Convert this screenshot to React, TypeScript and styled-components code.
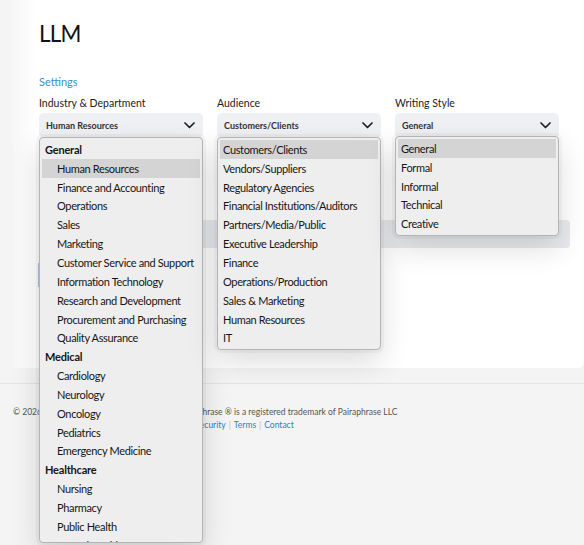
import React from "react";
import styled, { createGlobalStyle } from "styled-components";

const GlobalStyle = createGlobalStyle`
  html, body { margin: 0; padding: 0; background: #f4f4f4; overflow: hidden; }
  body { font-family: Lato, "Open Sans", sans-serif; }
`;

const Page = styled.div`
  width: 584px;
  height: 545px;
  position: relative;
`;

const Top = styled.div`
  padding-left: 13px;
`;

const Card = styled.main`
  height: 368px;
  box-sizing: border-box;
  background: linear-gradient(to right, #f7f7f7 0, #ffffff 24px);
  border-bottom-right-radius: 6px;
  padding: 19px 0 0 26px;
`;

const Title = styled.h1`
  margin: 0;
  font-size: 22.5px;
  font-weight: 400;
  letter-spacing: -0.8px;
  line-height: 30px;
  color: #111;
`;

const SettingsLink = styled.a`
  display: block;
  margin-top: 26px;
  font-size: 11px;
  line-height: 14px;
  color: #3d8fc6;
  text-decoration: none;
`;

const Fields = styled.div`
  display: grid;
  grid-template-columns: repeat(3, 164px);
  column-gap: 14px;
  margin-top: 7px;
`;

const Field = styled.div`
  display: flex;
  flex-direction: column;
  position: relative;
`;

const Label = styled.label`
  font-size: 10.5px;
  line-height: 14px;
  color: #222;
  margin-bottom: 3px;
`;

const SelectBox = styled.div`
  height: 25px;
  box-sizing: border-box;
  background: #eef0f3;
  border-radius: 5px;
  display: flex;
  align-items: center;
  justify-content: space-between;
  padding: 0 8px 0 7px;
  font-size: 9px;
  font-weight: 700;
  color: #333;
`;

const Popup = styled.div<{ $top: number; $height?: number }>`
  position: absolute;
  left: 0;
  top: ${(p) => p.$top}px;
  width: 164px;
  ${(p) => (p.$height ? `height: ${p.$height}px;` : "")}
  overflow: hidden;
  box-sizing: border-box;
  background: #eeeeee;
  border: 1px solid #b4b4b4;
  border-radius: 4px;
  padding: 2px 2px;
  box-shadow: 0 0 0 3px rgba(0, 0, 0, 0.03), 0 12px 30px rgba(0, 0, 0, 0.14);
  z-index: 10;
  font-family: Lato, "Open Sans", sans-serif;
`;

const Option = styled.div<{ $active?: boolean; $group?: boolean; $indent?: boolean }>`
  height: 18.85px;
  display: flex;
  align-items: center;
  padding-left: ${(p) => (p.$indent ? 15 : 3)}px;
  font-size: 11px;
  letter-spacing: ${(p) => (p.$group ? -0.2 : -0.35)}px;
  color: #161616;
  font-weight: ${(p) => (p.$group ? 700 : 400)};
  background: ${(p) => (p.$active ? "#d4d4d4" : "transparent")};
  white-space: nowrap;
`;

const Band = styled.div`
  margin: 82px 14px 0 0;
  height: 28px;
  background: #e8eaed;
  border-radius: 4px;
`;

const BlueBar = styled.div`
  margin: 15px 0 0 -1px;
  width: 2px;
  height: 24px;
  background: #a9c7df;
`;

const Footer = styled.footer`
  margin-top: 15px;
  border-top: 1px solid #e4e4e4;
  padding: 22px 13px 0;
`;

const FooterText = styled.div`
  display: inline-block;
  text-align: center;
  font-size: 8.5px;
  line-height: 13px;
  color: #555;
`;

const FooterLink = styled.a`
  color: #2e7fbf;
  text-decoration: none;
`;

const Sep = styled.span`
  color: #bbb;
  margin: 0 3px;
`;

const Chevron = () => (
  <svg width="11" height="7" viewBox="0 0 11 7" fill="none">
    <path d="M1 1 L5.5 5.5 L10 1" stroke="#222" strokeWidth="1.7" strokeLinecap="round" strokeLinejoin="round" />
  </svg>
);

type Item = { label: string; group?: boolean };

const industry: Item[] = [
  { label: "General", group: true },
  { label: "Human Resources" },
  { label: "Finance and Accounting" },
  { label: "Operations" },
  { label: "Sales" },
  { label: "Marketing" },
  { label: "Customer Service and Support" },
  { label: "Information Technology" },
  { label: "Research and Development" },
  { label: "Procurement and Purchasing" },
  { label: "Quality Assurance" },
  { label: "Medical", group: true },
  { label: "Cardiology" },
  { label: "Neurology" },
  { label: "Oncology" },
  { label: "Pediatrics" },
  { label: "Emergency Medicine" },
  { label: "Healthcare", group: true },
  { label: "Nursing" },
  { label: "Pharmacy" },
  { label: "Public Health" },
  { label: "Mental Health" },
  { label: "Dentistry" },
];

const audience = [
  "Customers/Clients",
  "Vendors/Suppliers",
  "Regulatory Agencies",
  "Financial Institutions/Auditors",
  "Partners/Media/Public",
  "Executive Leadership",
  "Finance",
  "Operations/Production",
  "Sales & Marketing",
  "Human Resources",
  "IT",
];

const styles = ["General", "Formal", "Informal", "Technical", "Creative"];

export default function App() {
  return (
    <Page>
      <GlobalStyle />
      <Top>
        <Card>
          <Title>LLM</Title>
          <SettingsLink href="#">Settings</SettingsLink>
          <Fields>
            <Field>
              <Label>Industry &amp; Department</Label>
              <SelectBox>
                Human Resources
                <Chevron />
              </SelectBox>
              <Popup $top={41} $height={406}>
                {industry.map((it) => (
                  <Option
                    key={it.label}
                    $group={it.group}
                    $indent={!it.group}
                    $active={it.label === "Human Resources"}
                  >
                    {it.label}
                  </Option>
                ))}
              </Popup>
            </Field>
            <Field>
              <Label>Audience</Label>
              <SelectBox>
                Customers/Clients
                <Chevron />
              </SelectBox>
              <Popup $top={41}>
                {audience.map((a, i) => (
                  <Option key={a} $active={i === 0}>
                    {a}
                  </Option>
                ))}
              </Popup>
            </Field>
            <Field>
              <Label>Writing Style</Label>
              <SelectBox>
                General
                <Chevron />
              </SelectBox>
              <Popup $top={40}>
                {styles.map((s, i) => (
                  <Option key={s} $active={i === 0}>
                    {s}
                  </Option>
                ))}
              </Popup>
            </Field>
          </Fields>
          <Band />
          <BlueBar />
        </Card>
      </Top>
      <Footer>
        <FooterText>
          © 2026 Pairaphrase LLC. All rights reserved. Pairaphrase ® is a registered trademark of Pairaphrase LLC
          <br />
          <FooterLink href="#">Privacy Policy</FooterLink>
          <Sep>|</Sep>
          <FooterLink href="#">Data security</FooterLink>
          <Sep>|</Sep>
          <FooterLink href="#">Terms</FooterLink>
          <Sep>|</Sep>
          <FooterLink href="#">Contact</FooterLink>
        </FooterText>
      </Footer>
    </Page>
  );
}
